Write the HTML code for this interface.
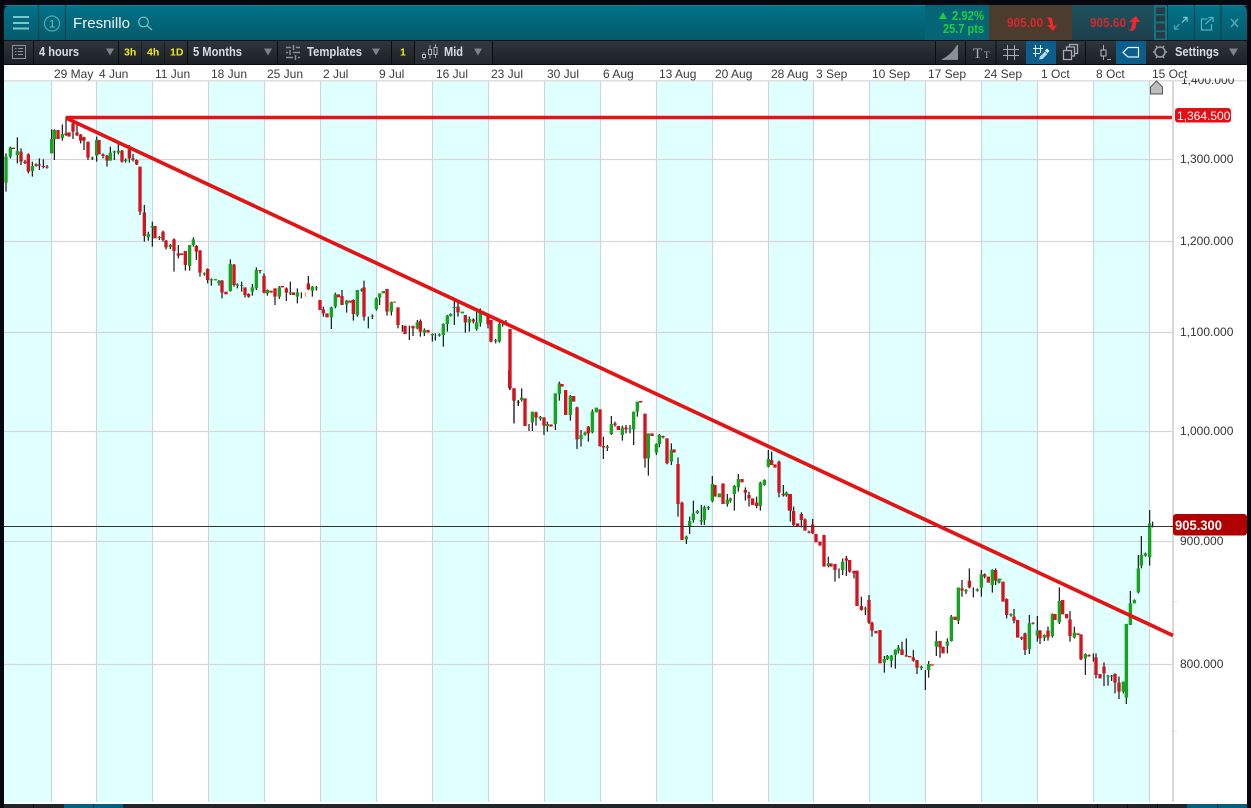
<!DOCTYPE html>
<html><head><meta charset="utf-8"><title>Fresnillo</title>
<style>
html,body{margin:0;padding:0;background:#05080f;width:1251px;height:808px;overflow:hidden}
svg{display:block}
text{font-family:"Liberation Sans",Arial,sans-serif}
.d{font-size:12px;fill:#3a3a3a}
.p{font-size:12px;fill:#333}
.t{font-size:13px;font-weight:bold;fill:#d8dde0}
.y{font-size:10.5px;font-weight:bold;fill:#f0e81a}
</style></head><body>
<svg xmlns="http://www.w3.org/2000/svg" width="1251" height="808" viewBox="0 0 1251 808">
<defs>
<linearGradient id="h" x1="0" y1="0" x2="0" y2="1"><stop offset="0" stop-color="#007389"/><stop offset="1" stop-color="#045a6b"/></linearGradient>
<linearGradient id="b" x1="0" y1="0" x2="0" y2="1"><stop offset="0" stop-color="#2f353b"/><stop offset="1" stop-color="#1c2025"/></linearGradient>
<linearGradient id="bb" x1="0" y1="0" x2="0" y2="1"><stop offset="0" stop-color="#1f5260"/><stop offset="1" stop-color="#1d3f4b"/></linearGradient>
</defs>
<rect width="1251" height="808" fill="#05080f"/>
<!-- chart -->
<rect x="4" y="65" width="1243" height="739" fill="#fff"/>
<path fill="#e0ffff" d="M4 81h48v721H4zM97 81h56v721H97zM209 81h56v721h-56zM321 81h56v721h-56zM433 81h56v721h-56zM545 81h56v721h-56zM657 81h56v721h-56zM769 81h45v721h-45zM870 81h56v721h-56zM982 81h56v721h-56zM1094 81h56v721h-56z"/>
<path stroke="#c8d8dc" stroke-width="1.2" fill="none" d="M51.500 81V802M96.500 81V802M152.500 81V802M208.500 81V802M264.500 81V802M320.500 81V802M376.500 81V802M432.500 81V802M488.500 81V802M544.500 81V802M600.500 81V802M656.500 81V802M712.500 81V802M768.500 81V802M813.500 81V802M869.500 81V802M925.500 81V802M981.500 81V802M1037.500 81V802M1093.500 81V802M1149.500 81V802"/>
<path stroke="#d6d6d6" stroke-width="1.200" fill="none" d="M4 159.500H1172M4 241.500H1172M4 332.500H1172M4 431.500H1172M4 541.500H1172M4 664.500H1172"/>
<path stroke="#e8e8e8" stroke-width="1" fill="none" d="M1173 601.500h4M1173 731.500h4"/>
<rect x="1172" y="81" width="2" height="721" fill="#d8d8d8"/>
<rect x="4" y="80" width="1243" height="1.500" fill="#dedede"/>
<text class="p" x="1181" y="84">1,400.000</text>
<rect x="4" y="65" width="1243" height="13.500" fill="#fff"/>
<text class="p" x="1180" y="163">1,300.000</text>
<text class="p" x="1180" y="245">1,200.000</text>
<text class="p" x="1180" y="336">1,100.000</text>
<text class="p" x="1180" y="435">1,000.000</text>
<text class="p" x="1180" y="545">900.000</text>
<text class="p" x="1180" y="668">800.000</text>
<g>
<text class="d" x="54" y="78">29 May</text><text class="d" x="99" y="78">4 Jun</text><text class="d" x="155" y="78">11 Jun</text><text class="d" x="211" y="78">18 Jun</text><text class="d" x="267" y="78">25 Jun</text><text class="d" x="323" y="78">2 Jul</text><text class="d" x="379" y="78">9 Jul</text><text class="d" x="436" y="78">16 Jul</text><text class="d" x="491" y="78">23 Jul</text><text class="d" x="547" y="78">30 Jul</text><text class="d" x="603" y="78">6 Aug</text><text class="d" x="659" y="78">13 Aug</text><text class="d" x="715" y="78">20 Aug</text><text class="d" x="771" y="78">28 Aug</text><text class="d" x="816" y="78">3 Sep</text><text class="d" x="872" y="78">10 Sep</text><text class="d" x="928" y="78">17 Sep</text><text class="d" x="984" y="78">24 Sep</text><text class="d" x="1041" y="78">1 Oct</text><text class="d" x="1096" y="78">8 Oct</text><text class="d" x="1152" y="78">15 Oct</text>
</g>
<!-- candles -->
<g fill="none">
<g transform="translate(0,110) scale(.33333)">
<path stroke="#111" stroke-width="3.500" d="M18 130V245M31 110V145M52 82V160M63 115V165M75 150V162M85 130V190M97 155V200M108 160V170M118 145V180M130 148V175M141 165V176M155 58V130M163 58V150M187 43V92M198 20V78M219 30V87M231 40V78M242 72V100M252 80V120M264 95V150M277 140V150M290 80V155M309 130V145M321 135V170M331 110V152M343 122V150M355 100V133M366 120V158M377 145V158M388 105V158M399 132V155M410 148V165M420 170V315M433 285V395M445 365V392M457 335V410M478 378V390M489 362V395M498 390V418M511 402V417M522 385V485M535 405V445M556 423V482M569 405V482M580 382V410M589 405V450M600 420V500M613 487V497M623 475V520M634 505V527M657 510V527M666 510V565M691 448V545M702 462V530M712 520V535"/>
<path stroke="#14a51e" stroke-width="10" d="M18 140V218M31 113V140M52 123V135M97 168V183M155 87V130M163 60V88M187 72V84M277 143V146M290 90V137M331 128V152M343 124V127M355 122V128M377 149V153M445 372V382M457 348V353M478 381V384M511 405V411M569 405V468M580 388V405M613 490V493M634 508V511M646 507V511M657 513V520M691 462V543M712 523V527"/>
<path stroke="#d3141e" stroke-width="10" d="M40 113V117M63 125V155M75 155V159M85 133V185M108 163V167M118 163V167M130 168V171M141 170V173M174 60V87M198 70V75M207 67V80M219 40V65M231 67V76M242 74V92M252 82V92M264 95V143M297 90V133M309 133V138M321 137V152M366 122V155M388 118V145M399 145V150M410 150V163M420 170V305M433 307V378M465 348V385M489 365V390M498 392V412M522 388V423M535 430V437M545 430V435M556 423V465M589 408V425M600 422V488M623 477V510M666 512V548M678 545V553M702 464V525"/>
</g>
<g transform="translate(240,260) scale(.33333)">
<path stroke="#111" stroke-width="3.500" d="M5 65V95M15 82V112M26 100V113M37 72V107M49 22V90M60 30V40M72 40V100M82 88V107M105 85V135M118 78V117M127 78V82M139 82V123M151 65V105M172 85V130M184 97V115M205 48V90M217 78V110M229 78V92M250 140V170M274 140V207M286 98V145M306 90V135M320 120V158M340 118V182M352 90V170M365 85V95M372 62V182M385 170V205M397 163V177M409 112V152M419 100V135M441 87V167M454 125V167M474 142V205M487 195V215M508 197V240M519 197V228M532 180V208M541 178V230M553 205V228M577 220V245M586 220V242M598 220V230M610 190V260M622 165V215M632 160V170M643 120V195M654 125V170M676 165V218M688 170V215M700 175V190M710 155V212M721 145V200M744 165V205M753 180V247M767 237V250M778 180V248M788 185V200M798 180V195M810 207V390M822 385V490M835 422V437"/>
<path stroke="#e08a20" stroke-width="3" d="M196 97V110"/>
<path stroke="#14a51e" stroke-width="10" d="M5 75V78M37 82V95M49 30V85M82 90V100M118 82V110M151 97V100M172 97V110M217 80V92M229 82V85M274 142V172M286 103V140M320 122V133M352 90V165M365 88V92M397 167V170M409 115V147M419 100V113M430 93V100M454 127V155M532 187V205M553 210V218M577 222V226M598 223V227M610 192V225M622 167V192M632 162V168M643 141V144M667 155V160M688 177V188M710 187V207M721 152V188M767 241V244M778 192V245M835 425V428"/>
<path stroke="#d3141e" stroke-width="10" d="M15 82V105M26 102V110M60 30V33M72 48V98M93 92V98M105 85V110M127 78V82M139 85V98M160 97V105M205 70V88M240 120V150M250 148V160M261 160V172M295 103V112M306 108V135M330 122V128M340 120V162M372 82V170M441 87V155M463 125V128M474 142V195M495 197V222M519 198V205M541 183V215M564 210V218M654 140V157M676 165V187M700 178V185M733 160V165M744 170V193M753 180V245M810 207V385M822 385V422"/>
</g>
<g transform="translate(500,370) scale(.33333)">
<path stroke="#111" stroke-width="3.500" d="M29 0V58M42 55V160M55 90V108M65 55V95M87 162V183M97 125V183M108 125V167M121 138V152M132 142V195M142 155V185M166 70V180M178 35V92M211 75V152M231 110V237M243 180V230M255 185V197M265 168V215M277 118V190M300 118V230M310 200V267M322 225V243M334 138V195M345 155V170M367 167V212M378 165V190M390 165V190M401 125V225M412 95V140M435 130V293M445 190V317M469 220V255M478 192V232M489 197V205M501 205V283M514 220V285M534 262V440M546 395V510M559 497V522M569 440V492M580 392V458M592 420V432M604 405V465M613 407V465M625 408V420M637 318V397M682 372V410M691 383V398M703 345V422M715 312V365M736 352V392M747 365V410M770 380V415M781 335V422M793 328V347M805 240V292M815 245V285M837 272V382M850 345V380M859 365V380"/>
<path stroke="#14a51e" stroke-width="10" d="M65 83V90M97 125V157M121 141V146M142 162V168M166 70V162M178 40V72M211 78V135M243 195V207M255 188V194M277 125V187M289 113V127M322 230V234M334 162V192M367 173V195M390 175V178M401 125V178M412 95V125M469 222V248M478 195V222M445 190V265M514 240V275M559 500V508M569 453V468M580 430V450M592 423V429M604 450V455M613 412V450M625 411V415M637 342V393M658 370V382M682 390V402M691 385V392M703 348V372M715 327V352M781 338V408M793 330V345M805 267V290M859 368V376"/>
<path stroke="#d3141e" stroke-width="10" d="M29 0V52M42 55V92M75 85V168M108 127V143M132 142V167M153 163V170M186 42V50M197 60V135M221 78V95M231 112V208M265 170V190M300 118V228M310 228V232M345 160V165M355 168V180M378 173V178M422 93V98M435 132V265M456 190V198M489 198V202M501 205V280M522 238V248M534 282V402M546 398V510M645 345V380M669 340V402M726 327V337M736 360V368M747 375V385M758 385V405M770 398V408M815 270V285M825 283V293M837 275V368M850 372V376M868 372V422"/>
</g>
<g transform="translate(760,440) scale(.33333)">
<path stroke="#111" stroke-width="3.500" d="M91 200V245M101 200V258M124 217V262M135 235V272M147 272V280M158 237V282M205 350V382M225 372V425M237 385V415M248 355V405M259 348V408M269 360V398M282 392V415M304 470V512M316 500V525M327 465V552M336 545V590M373 648V698M382 645V660M394 645V682M406 628V686M415 615V640M426 605V645M439 595V650M460 630V665M471 660V702M484 677V690M496 690V750M506 663V713M529 573V648M540 603V653M562 595V640M574 525V605M595 442V552M606 420V470M618 447V462M628 385V445M640 442V472M652 445V455M664 390V470M674 400V415M697 388V458M707 385V435M717 415V430"/>
<path stroke="#14a51e" stroke-width="10" d="M205 370V378M248 365V390M316 505V508M373 657V668M382 648V657M394 647V662M406 630V645M415 623V632M484 680V684M506 672V690M529 603V620M562 605V617M574 530V603M595 443V542M618 450V454M652 448V452M664 403V443M697 390V435M717 418V428"/>
<path stroke="#d3141e" stroke-width="10" d="M91 162V212M101 213V255M113 250V258M124 222V240M135 238V272M147 275V278M158 253V280M168 282V307M180 305V317M192 285V380M213 370V380M225 372V390M259 355V362M269 360V395M282 393V400M291 392V498M304 498V510M327 480V548M336 548V572M348 573V580M360 570V670M426 628V645M439 646V650M449 648V652M460 652V662M471 660V683M516 673V677M540 603V622M549 620V640M585 530V540M606 445V452M628 422V442M674 403V410M685 410V428M707 390V422"/>
</g>
<g transform="translate(1000,500) scale(.33333)">
<path stroke="#111" stroke-width="3.500" d="M20 295V355M33 340V350M42 327V370M65 410V420M75 398V465M88 345V462M99 367V373M112 348V425M120 390V432M133 403V423M144 380V422M157 340V413M178 262V372M210 333V425M223 380V415M243 403V480M256 460V525M267 463V470M280 460V485M288 460V535M312 487V558M324 525V557M335 525V543M345 520V580M357 530V597M370 545V580M379 372V612M391 273V375M403 298V310M415 165V280M424 108V205M436 158V170M449 30V197M458 65V82"/>
<path stroke="#14a51e" stroke-width="10" d="M0 236V240M33 342V346M88 370V447M112 392V407M133 405V413M157 342V408M178 303V367M223 398V412M256 462V475M324 527V530M335 527V530M370 545V575M379 372V593M391 310V375M403 300V310M415 205V277M424 165V197M436 160V167M449 70V172"/>
<path stroke="#d3141e" stroke-width="10" d="M9 245V305M20 297V345M42 350V362M53 360V413M65 412V416M75 400V450M99 368V371M120 392V415M144 392V412M165 342V360M188 300V343M200 342V355M210 358V408M234 400V405M243 403V478M267 465V469M288 472V525M300 522V535M312 500V520M345 522V548M357 548V575"/>
</g>
</g>
<!-- price line and drawings -->
<rect x="4" y="526" width="1169" height="1" fill="#333"/>
<path stroke="#e51313" stroke-width="3.400" fill="none" d="M66 117.500H1172"/>
<path stroke="#e51313" stroke-width="3.700" fill="none" d="M66 118L1173 635.500"/>
<path d="M1150.500 94v-7l6-6 6 6v7z" fill="#bdbdbd" stroke="#555" stroke-width="1"/>
<rect x="1175" y="108" width="56" height="14.500" rx="3" fill="#e60d14"/>
<text x="1177" y="120" font-size="12" fill="#fff">1,364.500</text>
<rect x="1173" y="514" width="74" height="21.500" rx="3" fill="#b00000"/>
<text x="1175" y="530" font-size="13.500" font-weight="bold" fill="#fff" textLength="47" lengthAdjust="spacingAndGlyphs">905.300</text>
<!-- header -->
<path d="M4 40V11a6 6 0 0 1 6-6H1241a6 6 0 0 1 6 6V40z" fill="url(#h)"/>
<rect x="4" y="5" width="1243" height="1" fill="#2a8d9f" opacity=".6"/>
<path fill="#0b3c49" d="M38 5h1v35h-1zM65 5h1v35h-1z"/>
<path stroke="#7cc6cf" stroke-width="2" fill="none" d="M13 17h16M13 23h16M13 28.500h16"/>
<circle cx="52" cy="23.500" r="7.500" fill="none" stroke="#4fa9b6" stroke-width="1.200"/>
<text x="52" y="27.500" font-size="11" fill="#6fc0ca" text-anchor="middle">1</text>
<text x="73" y="28" font-size="15" fill="#f2f6f7" textLength="57" lengthAdjust="spacingAndGlyphs">Fresnillo</text>
<circle cx="143.500" cy="22" r="4.800" fill="none" stroke="#73bcc7" stroke-width="1.200"/>
<path d="M147 25.500l5 4.500" stroke="#73bcc7" stroke-width="1.400"/>
<rect x="925" y="5" width="64" height="35" fill="#046577"/>
<path d="M939 19l4-7 4 7z" fill="#1ecf3c"/>
<text x="952" y="20" font-size="12.500" font-weight="bold" fill="#1ecf3c" textLength="32" lengthAdjust="spacingAndGlyphs">2.92%</text>
<text x="943" y="33" font-size="12.500" font-weight="bold" fill="#1ecf3c" textLength="41" lengthAdjust="spacingAndGlyphs">25.7 pts</text>
<rect x="989" y="5" width="83" height="35" fill="#4b3c2d"/>
<text x="1007" y="27" font-size="12.500" font-weight="bold" fill="#d8262c" textLength="36" lengthAdjust="spacingAndGlyphs">905.00</text>
<path d="M1047 17l5 1 1.500 8 3.500-1-4 6-6-6 3.500 0z" fill="#f0282d"/>
<rect x="1072" y="5" width="82" height="35" fill="url(#bb)"/>
<text x="1090" y="27" font-size="12.500" font-weight="bold" fill="#d8262c" textLength="36" lengthAdjust="spacingAndGlyphs">905.60</text>
<path d="M1128 30l3-1 1.500-7-3.500 0 7-6 4 6-3.500 0-1 6-3 3z" fill="#f0282d"/>
<rect x="1154" y="5" width="13" height="35" fill="#0a7687"/>
<path fill="#2b3a40" d="M1156 7.500h9V14h-9zM1156 15.500h9V21.500h-9zM1156 23.500h9V30.500h-9zM1156 32h9V38.500h-9z"/>
<path fill="#0b3c49" d="M1167 5h1v35h-1zM1194 5h1v35h-1zM1220.500 5h1v35h-1z"/>
<path fill="none" stroke="#3f9fb0" stroke-width="1.400" d="M1179.500 24l-5 5M1174.500 25v4h4"/>
<path fill="none" stroke="#6cc3cf" stroke-width="1.400" d="M1182 22.500l5-5M1183 17.500h4v4"/>
<path fill="none" stroke="#4fb0bf" stroke-width="1.300" d="M1211.500 24v6h-10v-11h6M1205.500 24l7-6.500M1208.500 17.500h4.500v4.500"/>
<path fill="none" stroke="#4fa5b2" stroke-width="1.700" d="M1231 19l7 8M1238 19l-7 8"/>
<!-- toolbar -->
<rect x="4" y="41" width="1243" height="23.500" fill="url(#b)"/>
<rect x="4" y="40" width="1243" height="1" fill="#04141a"/>
<rect x="4" y="64" width="1243" height="1" fill="#0a0c10"/>
<path fill="#0b0d11" d="M33 41h1v23h-1zM118 41h1v23h-1zM141.500 41h.5v23h-.5zM164.500 41h.5v23h-.5zM187 41h1v23h-1zM277 41h1v23h-1zM391 41h1v23h-1zM414 41h1v23h-1zM492 41h1v23h-1zM935 41h1v23h-1zM965 41h1v23h-1zM995.500 41h1v23h-1zM1085 41h1v23h-1zM1055 41h1v23h-1z"/>
<path fill="#3a4046" d="M415 41h77v23h-77z" opacity=".35"/>
<rect x="12.500" y="45.500" width="13" height="13" fill="none" stroke="#8c9296" stroke-width="1"/>
<path stroke="#8c9296" stroke-width="1" fill="none" d="M15 48.500h1.500M18 48.500h5M15 51.500h1.500M18 51.500h5M15 54.500h1.500M18 54.500h5"/>
<text class="t" x="39" y="56" textLength="40" lengthAdjust="spacingAndGlyphs">4 hours</text>
<path d="M106 48.500h8l-4 7z" fill="#7c8288"/>
<text class="y" x="124" y="55.500">3h</text>
<text class="y" x="147" y="55.500">4h</text>
<text class="y" x="170" y="55.500">1D</text>
<text class="t" x="193" y="56" textLength="49" lengthAdjust="spacingAndGlyphs">5 Months</text>
<path d="M264 48.500h8l-4 7z" fill="#7c8288"/>
<path stroke="#8a8f94" stroke-width="1.500" fill="none" d="M286 47.500h5M296 47.500h4M293.500 45v5M286 52.500h2M293 52.500h7M290 50v5M286 57.500h7M298 57.500h2M295.500 55v5"/>
<text class="t" x="307" y="56" textLength="55" lengthAdjust="spacingAndGlyphs">Templates</text>
<path d="M372 48.500h8l-4 7z" fill="#7c8288"/>
<text class="y" x="400" y="55.500">1</text>
<path stroke="#9aa0a4" stroke-width="1" fill="none" d="M424 52v8M430 45v14M435.500 44v14"/>
<path fill="#23272c" stroke="#b4babd" stroke-width="1" d="M422.500 54.500h3v3h-3zM428.500 49.500h3v5h-3zM434 47.500h3v7h-3z"/>
<text class="t" x="444" y="56" textLength="19" lengthAdjust="spacingAndGlyphs">Mid</text>
<path d="M474 48.500h8l-4 7z" fill="#7c8288"/>
<!-- right tools -->
<path d="M957 45v14h-15c5-2 11-7 15-14z" fill="#8c9094"/>
<path d="M942 59.500h15.500V45" fill="none" stroke="#a4a8ab" stroke-width=".8"/>
<text x="973" y="58" font-size="15" fill="#a8acaf" style="font-family:'Liberation Serif',serif">T</text>
<text x="984" y="58" font-size="9" fill="#a8acaf" style="font-family:'Liberation Serif',serif">T</text>
<path stroke="#a8acaf" stroke-width="1" fill="none" d="M1007.500 45v15M1014.500 45v15M1003 49.500h16M1003 55.500h16"/>
<rect x="1026" y="41" width="30" height="23" fill="#0a5e8c"/>
<path stroke="#e8eef0" stroke-width="1" fill="none" d="M1035.500 45v12M1040.500 45v8M1033 48.500h10M1033 53.500h7"/>
<path d="M1039 59.500l1-3 5-5 2.500 2.500-5 5z" fill="#bcd6e6"/>
<path d="M1045 50.500l2-2 2.500 2.500-2 2z" fill="#eaf2f6"/>
<path fill="none" stroke="#a8acaf" stroke-width="1.300" d="M1063.500 50.500h8v9h-8zM1066.500 50v-3h8v9h-3M1069.500 47v-2.500h8v9h-2.500"/>
<path stroke="#a8acaf" stroke-width="1" fill="none" d="M1103.500 45v15"/>
<rect x="1101" y="50" width="5" height="6" fill="#1f2328" stroke="#b8bcbf" stroke-width="1"/>
<path stroke="#a0a4a8" stroke-width="1" d="M1107 59.500h4"/>
<rect x="1116" y="41" width="30" height="23" fill="#0a5e8c"/>
<path d="M1128 47.500h10.500v9.500H1128l-5-4.500z" fill="none" stroke="#eaf2f6" stroke-width="1.200"/>
<circle cx="1160" cy="52" r="5" fill="none" stroke="#969a9e" stroke-width="1.600"/>
<path stroke="#969a9e" stroke-width="1.500" d="M1156 46l1.500 2M1164 46l-1.500 2M1156 58l1.500-2M1164 58l-1.500-2M1153 52h2M1165 52h2"/>
<text class="t" x="1175" y="56" textLength="44" lengthAdjust="spacingAndGlyphs">Settings</text>
<path d="M1229 48.500h9l-4.500 7.500z" fill="#7c8288"/>
<!-- bottom -->
<rect x="4" y="804" width="1243" height="4" fill="#20252a"/>
<path fill="#045e80" d="M64 804h29v4H64zM94 804h29v4H94zM1187 804h30v4h-30zM1218 804h29v4h-29z"/>
<path fill="#0a0c10" d="M33 804h1v4h-1zM1097 804h1v4h-1zM1127 804h1v4h-1zM1157 804h1v4h-1z"/>
</svg>
</body></html>
